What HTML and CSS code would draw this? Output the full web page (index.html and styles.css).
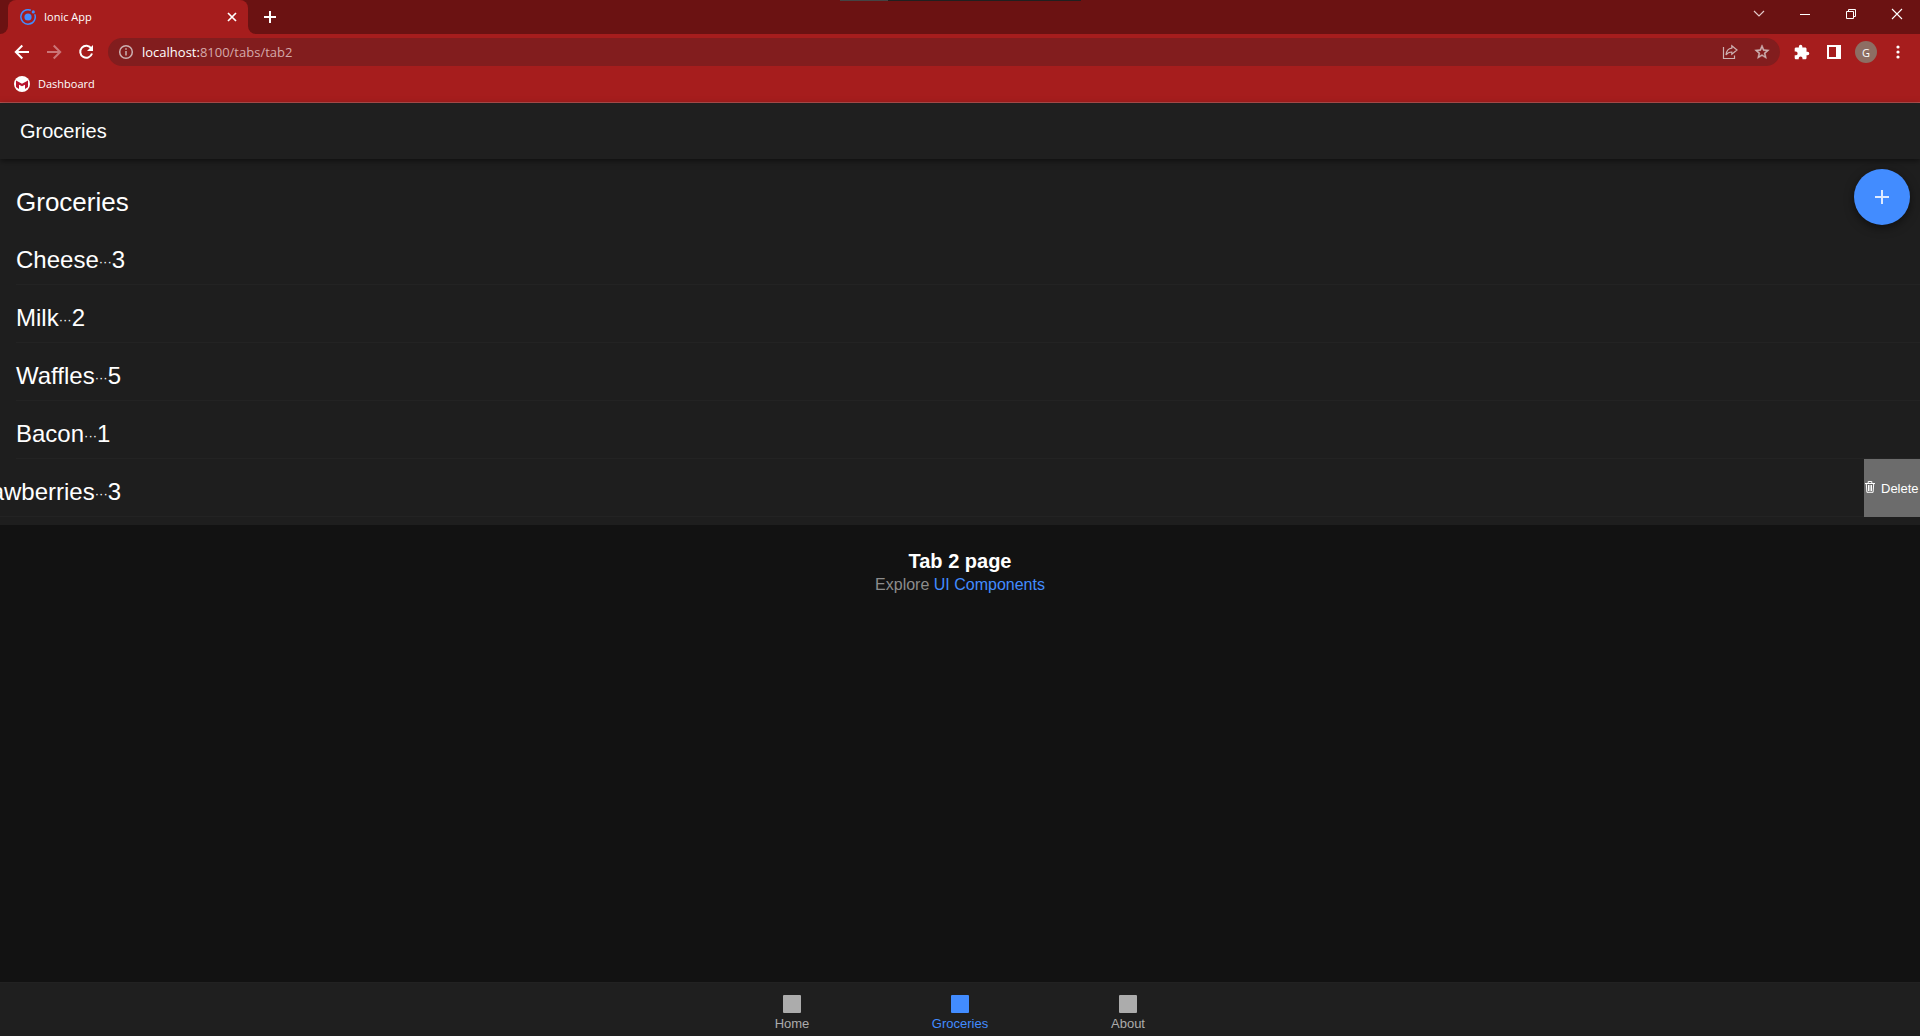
FILE: index.html
```html
<!DOCTYPE html>
<html lang="en">
<head>
<meta charset="utf-8">
<title>Ionic App</title>
<link rel="stylesheet" href="styles.css">
</head>
<body>
<div class="browser">
  <div class="tab-strip">
    <div class="notch"></div>
    <div class="browser-tab">
      <svg class="favicon" width="16" height="16" viewBox="0 0 16 16" fill="none" aria-hidden="true"><path d="M10.8 1.3A7.2 7.2 0 1 0 14.7 5.2" stroke="#428cff" stroke-width="1.5"/><circle cx="8" cy="8" r="3.6" fill="#428cff"/><circle cx="13.3" cy="2.9" r="1.6" fill="#428cff"/></svg>
      <span class="tab-title">Ionic App</span>
      <button class="icon-button" aria-label="Close tab"><svg width="16" height="16" viewBox="0 0 16 16" stroke="#fff" stroke-width="1.7"><path d="M4 4l8 8M12 4l-8 8"/></svg></button>
    </div>
    <button class="icon-button new-tab" aria-label="New tab"><svg width="16" height="16" viewBox="0 0 16 16" stroke="#fff" stroke-width="2"><path d="M8 2v12M2 8h12"/></svg></button>
    <div class="window-controls">
      <button class="icon-button" aria-label="Search tabs"><svg width="12" height="12" viewBox="0 0 12 12" fill="none" stroke="#e3c9c9" stroke-width="1.2"><path d="M1 3l5 5 5-5"/></svg></button>
      <button class="icon-button" aria-label="Minimize"><svg width="12" height="12" viewBox="0 0 12 12" stroke="#fff"><path d="M1 6.5h10"/></svg></button>
      <button class="icon-button" aria-label="Restore"><svg width="12" height="12" viewBox="0 0 12 12" fill="none" stroke="#fff"><path d="M1.500 3.500h7v7h-7zM3.500 3.500v-2h7v7h-2"/></svg></button>
      <button class="icon-button" aria-label="Close"><svg width="12" height="12" viewBox="0 0 12 12" stroke="#fff" stroke-width="1.1"><path d="M1 1l10 10M11 1L1 11"/></svg></button>
    </div>
    <div class="overlay-bar"></div>
  </div>
  <div class="toolbar">
    <button class="icon-button" aria-label="Back"><svg width="16" height="16" viewBox="0 0 16 16" fill="none" stroke="#fff" stroke-width="2"><path d="M15 8H2.500M8.300 1.500L1.800 8l6.500 6.500"/></svg></button>
    <button class="icon-button" aria-label="Forward" disabled><svg width="16" height="16" viewBox="0 0 16 16" fill="none" stroke="#cb7577" stroke-width="2"><path d="M1 8h12.500M7.700 1.500L14.200 8l-6.500 6.500"/></svg></button>
    <button class="icon-button" aria-label="Reload"><svg width="16" height="16" viewBox="0 0 16 16" fill="none" stroke="#fff" stroke-width="2"><path d="M13.300 4.500A6 6 0 1 0 14 9.500"/><path d="M15 1v6H9z" fill="#fff" stroke="none"/></svg></button>
    <div class="address-bar">
      <svg width="16" height="16" viewBox="0 0 16 16" fill="none" stroke="#ccb0b1" stroke-width="1.500" aria-hidden="true"><circle cx="8" cy="8" r="6.300"/><path d="M8 7v4.500M8 4.300v1.500"/></svg>
      <div class="address"><span class="host">localhost:</span>8100/tabs/tab2</div>
      <div class="address-actions">
        <button class="icon-button" aria-label="Share"><svg width="16" height="16" viewBox="0 0 16 16" fill="none" stroke="#cdb0b1" stroke-width="1.200"><path d="M1.500 3v11.500h11v-3"/><path d="M9.800 1.800L15 6 9.800 10.200V8C7.300 8 5.300 9 4 11c.3-3.800 2.400-6.500 5.800-6.900z"/></svg></button>
        <button class="icon-button" aria-label="Bookmark"><svg width="16" height="16" viewBox="1 1 22 22" fill="#cdb0b1"><path d="M22 9.240l-7.190-.62L12 2 9.190 8.630 2 9.240l5.460 4.730L5.820 21 12 17.270 18.180 21l-1.630-7.030L22 9.240zM12 15.400l-3.760 2.270 1-4.280-3.320-2.880 4.380-.38L12 6.100l1.710 4.040 4.380.38-3.320 2.880 1 4.280L12 15.400z" stroke="#cdb0b1" stroke-width=".6"/></svg></button>
      </div>
    </div>
    <div class="actions">
      <button class="icon-button" aria-label="Extensions"><svg width="16" height="16" viewBox="1 0 23 23" fill="#fff"><path d="M20.500 11H19V7c0-1.100-.9-2-2-2h-4V3.500a2.500 2.500 0 0 0-5 0V5H4c-1.100 0-2 .9-2 2v3.800h1.500a2.700 2.700 0 0 1 0 5.400H2V20c0 1.100.9 2 2 2h3.800v-1.500a2.700 2.700 0 0 1 5.400 0V22H17c1.100 0 2-.9 2-2v-4h1.500a2.500 2.500 0 0 0 0-5z"/></svg></button>
      <button class="icon-button" aria-label="Side panel"><svg width="16" height="16" viewBox="0 0 16 16"><path d="M2 2h12v12H2z" fill="none" stroke="#fff" stroke-width="2"/><path d="M10 1h5v14h-5z" fill="#fff"/></svg></button>
      <button class="avatar" aria-label="Profile">G</button>
      <button class="icon-button" aria-label="Menu"><svg width="16" height="16" viewBox="0 0 16 16" fill="#fff"><circle cx="8" cy="3" r="1.600"/><circle cx="8" cy="8" r="1.600"/><circle cx="8" cy="13" r="1.600"/></svg></button>
    </div>
  </div>
  <div class="bookmarks">
    <a class="bookmark" href="#">
      <svg width="16" height="16" viewBox="0 0 16 16" aria-hidden="true"><circle cx="8" cy="8" r="8" fill="#fff"/><path d="M2 4.500L8 7.800l6-3.300v6.500L11 13V8.800L8 10.300 5 8.800V13l-3-2z" fill="#b8142e"/></svg>
      Dashboard
    </a>
  </div>
</div>
<div class="app">
  <header class="app-header"><h1>Groceries</h1></header>
  <main class="content">
    <button class="fab" aria-label="Add item"><svg width="24" height="24" viewBox="0 0 24 24" stroke="#dfebff" stroke-width="2"><path d="M12 5v14M5 12h14"/></svg></button>
    <section class="list">
      <h2 class="list-header">Groceries</h2>
      <ul class="items">
        <li class="item"><div class="label">Cheese<span class="dots">···</span>3</div></li>
        <li class="item"><div class="label">Milk<span class="dots">···</span>2</div></li>
        <li class="item"><div class="label">Waffles<span class="dots">···</span>5</div></li>
        <li class="item"><div class="label">Bacon<span class="dots">···</span>1</div></li>
        <li class="item slid"><div class="label">Strawberries<span class="dots">···</span>3</div>
          <button class="delete"><svg width="12" height="16" viewBox="0 0 12 16" fill="none" stroke="#fff" aria-hidden="true"><path d="M1 3.500h10M4.200 3V1.500h3.600V3M2.300 4l.6 8.300h6.200L9.700 4M4.500 5v6M6 5v6M7.500 5v6"/></svg>Delete</button></li>
      </ul>
    </section>
    <section class="explore">
      <strong>Tab 2 page</strong>
      <p>Explore <a href="#">UI Components</a></p>
    </section>
  </main>
  <nav class="tab-bar">
    <a class="nav-tab" href="#"><span class="square"></span>Home</a>
    <a class="nav-tab selected" href="#"><span class="square"></span>Groceries</a>
    <a class="nav-tab" href="#"><span class="square"></span>About</a>
  </nav>
</div>
</body>
</html>
```
FILE: styles.css
```css
* { box-sizing: border-box; }
body {
  margin: 0;
  min-height: 100vh;
  display: flex;
  flex-direction: column;
  background: #121212;
  color: #fff;
  font-family: "Liberation Sans", Arial, sans-serif;
}
button { border: 0; padding: 0; background: none; color: inherit; font: inherit; }
a { text-decoration: none; color: inherit; }
svg { display: block; flex: none; }
h1, h2, p, ul { margin: 0; padding: 0; font-weight: 400; }

.browser {
  background: #a61d1d;
  border-bottom: 1px solid #b65150;
  font-family: "Open Sans", "Segoe UI", sans-serif;
  font-size: 11px;
}
.tab-strip { position: relative; display: flex; height: 34px; background: #a61d1d; }
.notch { width: 8px; background: #6b1212; border-bottom-right-radius: 8px; }
.browser-tab {
  display: flex;
  align-items: center;
  gap: 8px;
  width: 240px;
  padding: 0 8px 0 12px;
  background: #6b1212;
  position: relative;
  z-index: 0;
}
.browser-tab::before {
  content: "";
  position: absolute;
  inset: 0;
  z-index: -1;
  background: #a61d1d;
  border-radius: 8px 8px 0 0;
}
.tab-title { flex: 1; padding-bottom: 2px; }
.icon-button { display: flex; align-items: center; justify-content: center; }
.new-tab { width: 44px; background: #6b1212; border-bottom-left-radius: 8px; }
.window-controls {
  flex: 1;
  display: flex;
  justify-content: flex-end;
  padding-bottom: 6px;
  background: #6b1212;
}
.window-controls .icon-button { width: 46px; }
.overlay-bar {
  position: absolute;
  top: 0;
  left: 840px;
  width: 241px;
  height: 1px;
  background: linear-gradient(90deg, #444 20%, #202020 20%);
}
.toolbar { display: flex; align-items: center; height: 36px; padding: 0 14px 0 8px; }
.toolbar > .icon-button { width: 28px; margin-right: 4px; }
.address-bar {
  flex: 1;
  display: flex;
  align-items: center;
  gap: 8px;
  height: 28px;
  margin-left: 4px;
  padding: 0 10px;
  border-radius: 14px;
  background: #821d1e;
}
.address { flex: 1; color: #d5a9aa; font-size: 13px; }
.host { color: #fff; }
.address-actions { display: flex; gap: 16px; }
.actions { display: flex; align-items: center; gap: 16px; margin-left: 14px; }
.avatar {
  width: 22px;
  height: 22px;
  margin: 0 -3px;
  border-radius: 50%;
  background: #8d6e63;
  font-size: 11px;
}
.bookmarks { height: 32px; padding: 6px 14px; }
.bookmark { display: flex; align-items: center; gap: 8px; width: max-content; height: 16px; line-height: 14px; }

.app { flex: 1; display: flex; flex-direction: column; }
.app-header {
  position: relative;
  z-index: 1;
  display: flex;
  align-items: center;
  height: 56px;
  padding: 0 20px;
  background: #1f1f1f;
  box-shadow: 0 2px 6px rgba(0, 0, 0, .5);
}
.app-header h1 { font-size: 20px; }
.content { position: relative; flex: 1; }
.fab {
  position: absolute;
  top: 10px;
  right: 10px;
  display: flex;
  align-items: center;
  justify-content: center;
  width: 56px;
  height: 56px;
  border-radius: 50%;
  background: #428cff;
  box-shadow: 0 3px 10px rgba(0, 0, 0, .5);
}
.list { padding: 8px 0; background: #1e1e1e; }
.list-header { padding: 20px 16px 10px; font-size: 26px; line-height: 30px; }
.items { list-style: none; }
.item { position: relative; display: flex; height: 58px; padding-left: 16px; overflow: hidden; }
.label {
  flex: 1;
  padding-top: 10px;
  border-bottom: 1px solid #232323;
  font-size: 24px;
  line-height: 46px;
  white-space: nowrap;
}
.dots { font-size: 13px; line-height: 1; vertical-align: 2px; }
.slid .label { margin-left: -56px; }
.delete {
  display: flex;
  align-items: center;
  gap: 5px;
  width: 56px;
  background: #6c6c6c;
  font-size: 13px;
}
.explore { padding-top: 23px; text-align: center; color: #8c8c8c; font-size: 16px; }
.explore strong { color: #fff; font-size: 20px; line-height: 26px; }
.explore p { line-height: 22px; }
.explore a { color: #428cff; }
.tab-bar {
  display: flex;
  justify-content: center;
  height: 54px;
  border-top: 1px solid #222;
  background: #1f1f1f;
}
.nav-tab {
  display: flex;
  flex-direction: column;
  align-items: center;
  gap: 3px;
  width: 168px;
  padding-top: 12px;
  color: #acacac;
  font-size: 13px;
  line-height: 16px;
}
.square { width: 18px; height: 18px; border-radius: 1px; background: #acacac; }
.selected { color: #428cff; }
.selected .square { background: #428cff; }
```
